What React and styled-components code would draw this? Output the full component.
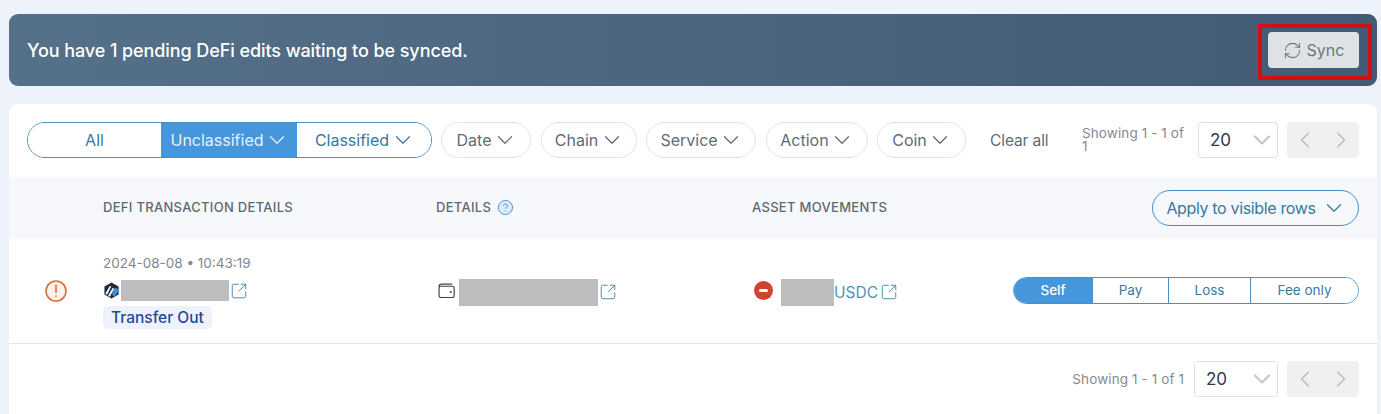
import React from "react";
import styled, { createGlobalStyle } from "styled-components";
import {
  ChevronDown,
  ChevronLeft,
  ChevronRight,
  CircleHelp,
  RefreshCw,
  SquareArrowOutUpRight,
} from "lucide-react";

const filters = [
  { label: "Date", width: 90 },
  { label: "Chain", width: 96 },
  { label: "Service", width: 110 },
  { label: "Action", width: 102 },
  { label: "Coin", width: 89 },
];

const treatments = [
  { label: "Self", width: 78, active: true },
  { label: "Pay", width: 76 },
  { label: "Loss", width: 82 },
  { label: "Fee only", width: 108 },
];

const App = () => {
  return (
    <Page>
      <GlobalStyle />
      <Banner>
        <BannerText>You have 1 pending DeFi edits waiting to be synced.</BannerText>
        <SyncButton>
          <RefreshCw size={19} strokeWidth={1.3} />
          Sync
        </SyncButton>
      </Banner>

      <Card>
        <Toolbar>
          <Segments>
            <Segment $width={134}>All</Segment>
            <Segment $width={136} $active>
              Unclassified <Chevron />
            </Segment>
            <Segment $width={135}>
              Classified <Chevron />
            </Segment>
          </Segments>
          <FilterGroup>
            {filters.map((filter) => (
              <FilterPill key={filter.label} $width={filter.width}>
                {filter.label} <Chevron />
              </FilterPill>
            ))}
          </FilterGroup>
          <ClearAll>Clear all</ClearAll>
          <Showing $narrow>Showing 1 - 1 of 1</Showing>
          <PageSize>
            20 <SelectChevron />
          </PageSize>
          <Pager>
            <ChevronLeft size={28} strokeWidth={1} />
            <ChevronRight size={28} strokeWidth={1} />
          </Pager>
        </Toolbar>

        <TableHead>
          <HeadCell />
          <HeadCell>DEFI TRANSACTION DETAILS</HeadCell>
          <HeadCell>
            DETAILS <CircleHelp size={17} strokeWidth={1.4} color="#4a96db" fill="#dcebf9" />
          </HeadCell>
          <HeadCell>ASSET MOVEMENTS</HeadCell>
          <ApplyButton>
            Apply to visible rows <Chevron />
          </ApplyButton>
        </TableHead>

        <Row>
          <StatusCell>
            <AlertIcon viewBox="0 0 22 22" fill="#fdf1ea" stroke="#d9703c" strokeWidth="1.6" strokeLinecap="round">
              <circle cx="11" cy="11" r="10" />
              <path d="M11 5.5v7" />
              <path d="M11 16v.2" />
            </AlertIcon>
          </StatusCell>
          <TransactionCell>
            <DateText>2024-08-08 • 10:43:19</DateText>
            <AccountLine>
              <ChainLogo viewBox="0 0 18 18">
                <path d="M9 0.5 16.5 4.8v8.4L9 17.5 1.5 13.2V4.8z" fill="#1d2d3f" />
                <path d="M10 8 14.5 6 16.5 9 12.5 15.5 10 14z" fill="#3d8fd8" />
                <path d="M2.5 12.5 7 4.5h1.8L4.4 13.5zM5.5 14.5 10 6.5h1.8l-4.4 9z" fill="#fff" />
              </ChainLogo>
              <Redacted $width={108} $height={21} />
              <LinkIcon size={18} strokeWidth={1.3} />
            </AccountLine>
            <TypeTag>Transfer Out</TypeTag>
          </TransactionCell>
          <DetailCell>
            <WalletIcon viewBox="0 0 16 16" fill="none" stroke="#3a4450" strokeWidth="1.1">
              <path d="M1 4.5C1 3 2 2 3.4 2H13" strokeLinecap="round" />
              <rect x="1" y="4" width="14.2" height="10.6" rx="1.6" />
              <circle cx="12" cy="9.5" r="0.4" fill="#3a4450" />
            </WalletIcon>
            <Redacted $width={139} $height={27} />
            <LinkIcon size={18} strokeWidth={1.3} />
          </DetailCell>
          <AssetCell>
            <MinusBadge />
            <Redacted $width={53} $height={27} />
            <AssetName>USDC</AssetName>
            <LinkIcon size={18} strokeWidth={1.3} />
          </AssetCell>
          <TreatmentCell>
            <TreatmentGroup>
              {treatments.map((item) => (
                <Treatment key={item.label} $width={item.width} $active={item.active}>
                  {item.label}
                </Treatment>
              ))}
            </TreatmentGroup>
          </TreatmentCell>
        </Row>

        <Footer>
          <Showing>Showing 1 - 1 of 1</Showing>
          <PageSize $footer>
            20 <SelectChevron />
          </PageSize>
          <Pager>
            <ChevronLeft size={28} strokeWidth={1} />
            <ChevronRight size={28} strokeWidth={1} />
          </Pager>
        </Footer>
      </Card>
    </Page>
  );
};

const GlobalStyle = createGlobalStyle`
  html, body {
    margin: 0;
    height: 414px;
    overflow: hidden;
    background: #eef3fb;
  }
  * {
    box-sizing: border-box;
  }
`;

const Page = styled.div`
  padding: 14px 4px 0 9px;
  font-family: "Inter", "Liberation Sans", sans-serif;
  color: #5f6b78;
`;

const Banner = styled.div`
  height: 72px;
  padding: 0 18px;
  display: flex;
  align-items: center;
  justify-content: space-between;
  border-radius: 9px;
  background: linear-gradient(90deg, #557089 0%, #435b74 100%);
`;

const BannerText = styled.div`
  font-size: 18px;
  font-weight: 500;
  color: #fff;
  letter-spacing: -0.08px;
`;

const SyncButton = styled.div`
  position: relative;
  width: 91px;
  height: 36px;
  display: flex;
  align-items: center;
  justify-content: center;
  gap: 5px;
  border-radius: 4px;
  background: #dfe3e6;
  color: #6d7680;
  font-size: 16px;

  &::after {
    content: "";
    position: absolute;
    left: -10px;
    right: -13px;
    top: -8px;
    bottom: -12px;
    border: 4px solid #d40f14;
  }
`;

const Card = styled.div`
  margin-top: 18px;
  height: 330px;
  border-radius: 9px 9px 0 0;
  background: #fff;
`;

const Chevron = styled(ChevronDown).attrs({ size: 26, strokeWidth: 1.1 })`
  margin: 0 -2.5px 0 -6.5px;
`;

const SelectChevron = styled(ChevronDown).attrs({ size: 28, strokeWidth: 2 })`
  color: #c4c7cc;
`;

const Toolbar = styled.div`
  height: 73px;
  padding: 18px 18px 19px;
  display: flex;
  align-items: center;
`;

const Segments = styled.div`
  height: 36px;
  display: flex;
  overflow: hidden;
  border: 1px solid #4a8fc4;
  border-radius: 18px;
`;

const Segment = styled.div`
  width: ${(p) => p.$width - (p.$active ? 0 : 1)}px;
  display: flex;
  align-items: center;
  justify-content: center;
  gap: 7px;
  font-size: 16px;
  background: ${(p) => (p.$active ? "#4596db" : "#fff")};
  color: ${(p) => (p.$active ? "#e6f2fb" : "#37799f")};
`;

const FilterGroup = styled.div`
  margin-left: 9px;
  display: flex;
  gap: 9.5px;
`;

const FilterPill = styled.div`
  width: ${(p) => p.$width}px;
  height: 36px;
  display: flex;
  align-items: center;
  justify-content: center;
  gap: 7px;
  border: 1px solid #e2e4e7;
  border-radius: 18px;
  font-size: 16px;
  color: #5f6b78;
`;

const ClearAll = styled.div`
  margin-left: 24px;
  width: 60px;
  font-size: 15.5px;
  white-space: nowrap;
  color: #5f6b78;
  letter-spacing: -0.1px;
`;

const Showing = styled.div`
  margin-left: ${(p) => (p.$narrow ? "32px" : "auto")};
  width: ${(p) => (p.$narrow ? "104px" : "auto")};
  font-size: 13.5px;
  line-height: 13px;
  letter-spacing: 0.1px;
  color: #858a91;
`;

const PageSize = styled.div`
  margin-left: ${(p) => (p.$footer ? "10px" : "12px")};
  margin-right: 9px;
  width: ${(p) => (p.$footer ? "84px" : "80px")};
  height: 36px;
  padding: 0 1px 0 11px;
  display: flex;
  align-items: center;
  justify-content: space-between;
  border: 1px solid #dfe1e4;
  border-radius: 4px;
  font-size: 17px;
  color: #2f3a47;
`;

const Pager = styled.div`
  width: 72px;
  height: 36px;
  display: flex;
  align-items: center;
  justify-content: space-around;
  border-radius: 4px;
  background: #eff0f2;
  color: #b3b7bc;
`;

const TableHead = styled.div`
  height: 62px;
  padding-right: 18px;
  display: grid;
  grid-template-columns: 94px 333px 316px 1fr auto;
  align-items: center;
  background: #f6f8fc;
`;

const HeadCell = styled.div`
  padding-bottom: 2px;
  display: flex;
  align-items: center;
  gap: 6px;
  font-size: 13px;
  font-weight: 500;
  letter-spacing: 0.3px;
  color: #5f6872;
`;

const ApplyButton = styled.div`
  grid-column: 5;
  width: 207px;
  height: 36px;
  display: flex;
  align-items: center;
  justify-content: center;
  gap: 12px;
  border: 1px solid #4a8fc4;
  border-radius: 18px;
  font-size: 16px;
  letter-spacing: -0.35px;
  color: #37799f;
`;

const Row = styled.div`
  height: 105px;
  padding-right: 18px;
  display: grid;
  grid-template-columns: 94px 333px 316px 1fr auto;
  align-items: center;
  border-bottom: 1px solid #e2e4e7;
`;

const StatusCell = styled.div`
  padding-left: 36px;
  display: flex;
  align-items: center;
`;

const AlertIcon = styled.svg`
  width: 22px;
  height: 22px;
`;

const TransactionCell = styled.div`
  padding-top: 2px;
  display: flex;
  flex-direction: column;
  align-items: flex-start;
  gap: 5px;
`;

const DateText = styled.div`
  margin-bottom: 4px;
  font-size: 13.5px;
  line-height: 16px;
  color: #808890;
`;

const AccountLine = styled.div`
  height: 21px;
  display: flex;
  align-items: center;
`;

const ChainLogo = styled.svg`
  width: 17px;
  height: 17px;
  margin-right: 1px;
`;

const Redacted = styled.div`
  width: ${(p) => p.$width}px;
  height: ${(p) => p.$height}px;
  background: #bdbdbd;
`;

const LinkIcon = styled(SquareArrowOutUpRight)`
  margin-left: 1px;
  color: #4a8ab0;
`;

const TypeTag = styled.div`
  height: 23px;
  padding: 0 8px;
  display: flex;
  align-items: center;
  border-radius: 5px;
  background: #eef3fb;
  font-size: 15.5px;
  font-weight: 500;
  color: #24479a;
`;

const DetailCell = styled.div`
  padding-top: 2px;
  display: flex;
  align-items: center;
`;

const WalletIcon = styled.svg`
  width: 17px;
  height: 17px;
  margin: 0 4px 4px 2px;
`;

const AssetCell = styled.div`
  padding-top: 2px;
  display: flex;
  align-items: center;
`;

const MinusBadge = styled.div`
  position: relative;
  width: 19px;
  height: 19px;
  margin: 0 8px 4px 2px;
  border-radius: 50%;
  background: #d0432f;

  &::after {
    content: "";
    position: absolute;
    left: 5px;
    right: 5px;
    top: 8px;
    height: 3px;
    border-radius: 2px;
    background: #fff;
  }
`;

const AssetName = styled.span`
  margin-right: 1px;
  font-size: 15.5px;
  color: #4f92b8;
`;

const TreatmentCell = styled.div`
  grid-column: 5;
  padding-bottom: 2px;
  display: flex;
  justify-content: flex-end;
`;

const TreatmentGroup = styled.div`
  height: 27px;
  display: flex;
  overflow: hidden;
  border: 1px solid #4a8fc4;
  border-radius: 14px;
`;

const Treatment = styled.div`
  width: ${(p) => p.$width}px;
  display: flex;
  align-items: center;
  justify-content: center;
  font-size: 13.5px;
  font-weight: ${(p) => (p.$active ? 500 : 400)};
  background: ${(p) => (p.$active ? "#4596db" : "#fff")};
  color: ${(p) => (p.$active ? "#fff" : "#37799f")};
  border-left: ${(p) => (p.$active ? "none" : "1px solid #4a8fc4")};
`;

const Footer = styled.div`
  padding: 17px 18px 0;
  display: flex;
  align-items: center;
`;

export default App;
